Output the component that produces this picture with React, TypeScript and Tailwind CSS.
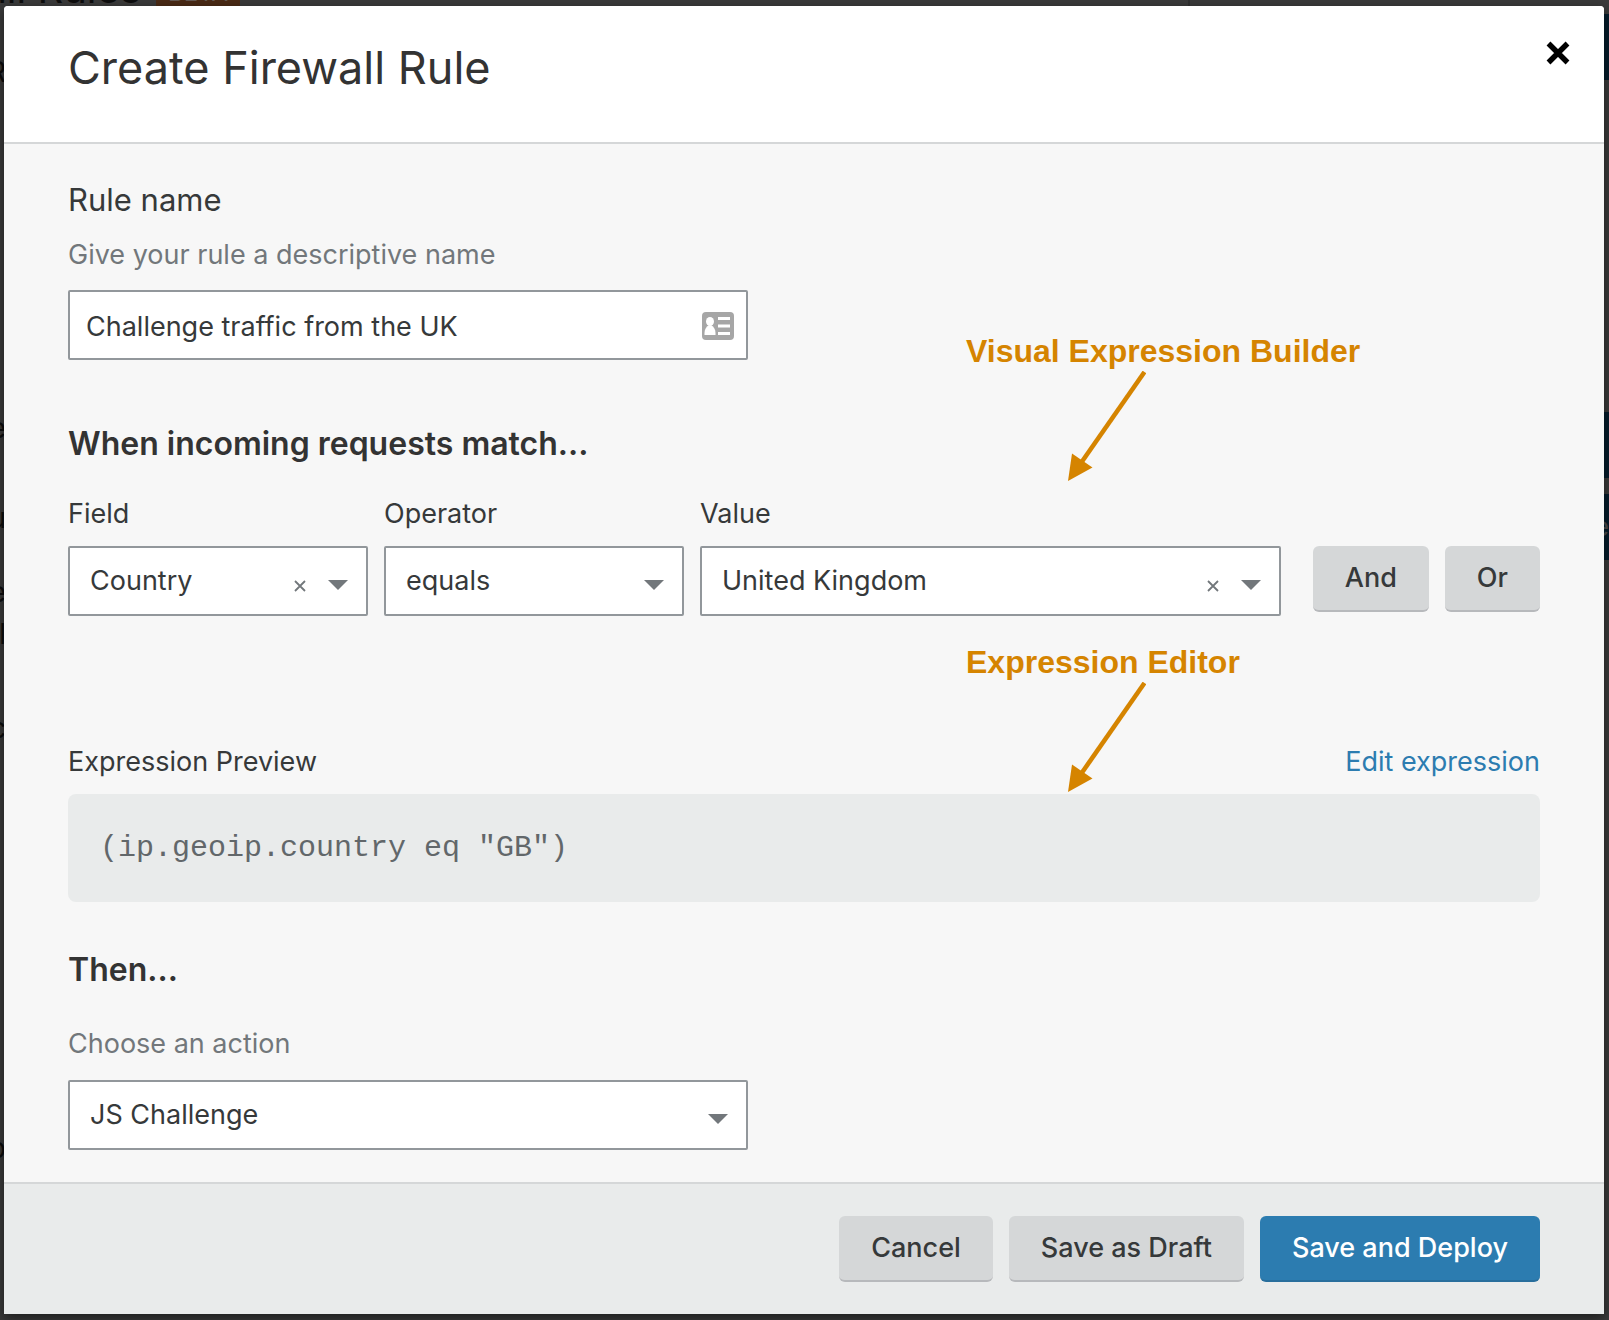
import React, { useState } from "react";

type SelectBoxProps = {
  id: string;
  label: string;
  options: string[];
  clearable?: boolean;
  muted?: boolean;
  className?: string;
};

function SelectBox({ id, label, options, clearable, muted, className = "" }: SelectBoxProps) {
  const [value, setValue] = useState(options[0]);
  return (
    <div className={`flex flex-col ${muted ? "gap-4" : "gap-3"} ${className}`}>
      <label htmlFor={id} className={`text-[27px] leading-10 ${muted ? "text-[#72777b]" : ""}`}>
        {label}
      </label>
      <div className="relative">
        <select
          id={id}
          value={value}
          onChange={(e) => setValue(e.target.value)}
          className="block h-[70px] w-full appearance-none rounded-xs border-2 border-[#92979b] bg-white pr-20 pl-5 text-[27px] text-[#36393a]"
        >
          {options.map((o) => (
            <option key={o}>{o}</option>
          ))}
        </select>
        {clearable && (
          <button type="button" aria-label={`Clear ${label}`} className="absolute top-8 right-[60px] p-0.5 text-[#72777b]">
            <svg viewBox="0 0 12 12" className="h-3 w-3" fill="none" stroke="currentColor" strokeWidth="1.8">
              <path d="M1 1l10 10M11 1L1 11" />
            </svg>
          </button>
        )}
        <svg viewBox="0 0 20 10" className="pointer-events-none absolute top-[34px] right-5 h-2.5 w-5 fill-[#72777b]">
          <path d="M0 0h20L10 10z" />
        </svg>
      </div>
    </div>
  );
}

function Annotation({ text, className }: { text: string; className: string }) {
  return (
    <div className={`pointer-events-none absolute left-[898px] text-[#d58400] ${className}`}>
      <p className="font-['Liberation_Sans',Arial,sans-serif] text-[32px] leading-9 font-bold whitespace-nowrap">{text}</p>
      <svg viewBox="0 0 80 112" className="mt-0.5 ml-[100px] h-28 w-20" fill="none">
        <path d="M78.5 1L15 92" stroke="currentColor" strokeWidth="4.6" />
        <path d="M2 110L6 82.500L26.500 96.500z" fill="currentColor" />
      </svg>
    </div>
  );
}

function ActionButton({ children, primary }: { children: React.ReactNode; primary?: boolean }) {
  return (
    <button
      type="button"
      className={`h-[66px] rounded-md border-b-2 px-8 text-[27px] whitespace-nowrap ${
        primary
          ? "border-[#286e9c] bg-[#2c7cb0] font-medium text-white"
          : "border-[#b7b9bc] bg-[#d5d7d8] font-[450] text-[#36393a]"
      }`}
    >
      {children}
    </button>
  );
}

function PageBehind() {
  return (
    <div aria-hidden="true" className="absolute inset-0 overflow-hidden bg-[#3a3a3a] text-[#0d0d0d]">
      <div className="absolute -top-[35px] left-0 flex items-start">
        <span className="flex w-[141px] justify-end text-[40px] leading-[48px] whitespace-nowrap">Firewall Rules</span>
        <span className="mt-2 ml-[15px] rounded-sm bg-[#4a2a15] px-3 text-[24px] leading-10 text-[#665a52]">BETA</span>
      </div>
      <div className="absolute top-0 left-[1188px] h-1.5 w-0.5 bg-[#303030]" />
      <div className="absolute left-0 w-1.5 text-[28px] leading-8">
        <span className="absolute top-[56px] right-0">R</span>
        <span className="absolute top-[412px] right-0">e</span>
        <span className="absolute top-[502px] right-0">u</span>
        <span className="absolute top-[576px] right-0">e</span>
        <span className="absolute top-[618px] right-0">l</span>
        <span className="absolute top-[712px] right-0">c</span>
        <span className="absolute top-[1132px] right-0">p</span>
      </div>
      <div className="absolute top-[14px] right-0 h-[66px] w-10 bg-[#051c2c]" />
      <div className="absolute top-[412px] right-0 h-[66px] w-10 bg-[#051c2c]" />
      <div className="absolute top-[494px] right-0 flex h-[66px] w-10 items-center justify-end bg-[#051c2c] text-[27px] text-[#4c4c4c]">
        e
      </div>
    </div>
  );
}

export default function App() {
  const [name, setName] = useState("Challenge traffic from the UK");
  return (
    <div className="relative min-h-screen pt-1.5 pr-[5px] pb-1.5 pl-1 font-[Inter,sans-serif] text-[#36393a]">
      <PageBehind />
      <div
        role="dialog"
        aria-labelledby="dialog-title"
        className="relative rounded-t-sm bg-[#f7f7f7] shadow-[0_4px_12px_rgba(0,0,0,0.5)]"
      >
        <header className="flex h-[138px] items-start justify-between rounded-t-sm border-b-2 border-[#d5d7d8] bg-white pr-8 pl-16">
          <h1 id="dialog-title" className="pt-[34px] text-[45px] leading-[56px] text-[#333]">
            Create Firewall Rule
          </h1>
          <button type="button" aria-label="Close" className="mt-[33px] p-0.5 text-black">
            <svg viewBox="0 0 24 24" className="h-6 w-6" fill="none" stroke="currentColor" strokeWidth="5.400">
              <path d="M2.500 2.500l19 19M21.500 2.500l-19 19" />
            </svg>
          </button>
        </header>

        <form className="px-16 pt-9 pb-8">
          <label htmlFor="rule-name" className="block text-[31px] leading-10">
            Rule name
          </label>
          <p className="mt-[15px] text-[27px] leading-10 text-[#72777b]">Give your rule a descriptive name</p>
          <div className="relative mt-[15px] w-[680px]">
            <input
              id="rule-name"
              value={name}
              onChange={(e) => setName(e.target.value)}
              className="block h-[70px] w-full rounded-xs border-2 border-[#92979b] bg-white pt-0.5 pr-16 pl-4 text-[27px]"
            />
            <svg viewBox="0 0 32 28" className="absolute top-[22px] right-3.5 h-7 w-8">
              <rect width="32" height="28" rx="4" fill="#a6a6a6" />
              <ellipse cx="8" cy="9.500" rx="4" ry="4.500" fill="#fff" />
              <path d="M2.500 23v-2c0-4 2-6.500 4-7.500h3c2 1 4 3.500 4 7.500v2z" fill="#fff" />
              <path d="M16 6.500h12M16 14h12M16 21.500h12" stroke="#fff" strokeWidth="3.200" />
            </svg>
          </div>

          <section className="relative mt-16">
            <h2 className="text-[32px] leading-10 font-semibold text-[#333]">When incoming requests match...</h2>
            <Annotation text="Visual Expression Builder" className="-top-[91px]" />
            <div className="mt-[30px] flex items-end">
              <SelectBox id="field" label="Field" options={["Country", "IP Address", "Hostname"]} clearable className="w-[300px]" />
              <SelectBox id="operator" label="Operator" options={["equals", "does not equal"]} className="ml-4 w-[300px]" />
              <SelectBox
                id="value"
                label="Value"
                options={["United Kingdom", "United States"]}
                clearable
                className="ml-4 flex-1"
              />
              <div className="mb-1 ml-8 flex gap-4">
                <ActionButton>And</ActionButton>
                <ActionButton>Or</ActionButton>
              </div>
            </div>
          </section>

          <section className="relative mt-[126px]">
            <Annotation text="Expression Editor" className="-top-[98px]" />
            <div className="flex justify-between text-[27px] leading-10">
              <h3>Expression Preview</h3>
              <a href="#edit" className="text-[#2c7cb0]">
                Edit expression
              </a>
            </div>
            <pre className="mt-3 rounded-lg bg-[#e9ebeb] px-8 py-8 font-['Liberation_Mono',monospace] text-[30px] leading-11 text-[#62676a]">
              (ip.geoip.country eq "GB")
            </pre>
          </section>

          <section className="mt-12">
            <h2 className="text-[32px] leading-10 font-semibold text-[#333]">Then...</h2>
            <SelectBox
              id="action"
              label="Choose an action"
              options={["JS Challenge", "Block", "Allow"]}
              muted
              className="mt-[34px] w-[680px]"
            />
          </section>
        </form>

        <footer className="flex justify-end gap-4 border-t-2 border-[#d5d7d8] bg-[#e9ebeb] px-16 py-8">
          <ActionButton>Cancel</ActionButton>
          <ActionButton>Save as Draft</ActionButton>
          <ActionButton primary>Save and Deploy</ActionButton>
        </footer>
      </div>
    </div>
  );
}
